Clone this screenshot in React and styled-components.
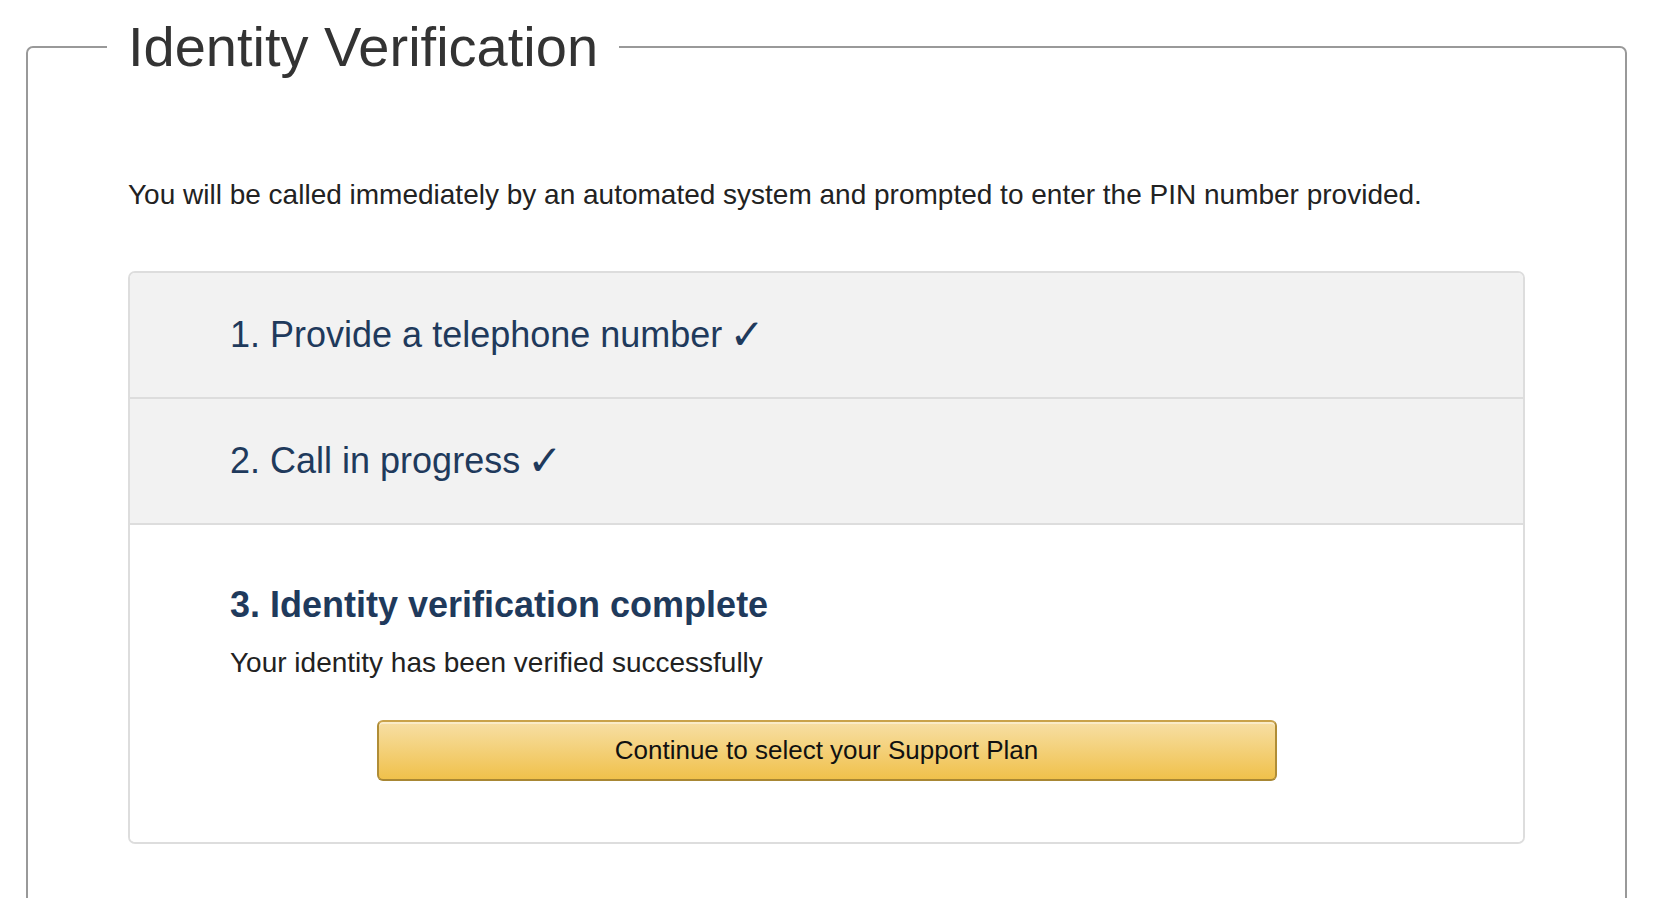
import styled, { createGlobalStyle } from 'styled-components';
import React from 'react';

const GlobalStyle = createGlobalStyle`
  html, body {
    margin: 0;
    padding: 0;
    background: #ffffff;
  }
  body {
    font-family: "Liberation Sans", Arial, sans-serif;
    color: #333333;
  }
`;

export default function App(){
    let passos = [
        { numero: 1, texto: "Provide a telephone number", feito: true },
        { numero: 2, texto: "Call in progress", feito: true },
    ];

    return(
        <>
            <GlobalStyle />
            <Pagina>
                <Quadro>
                    <Legenda>Identity Verification</Legenda>
                    <Aviso>
                        You will be called immediately by an automated system and prompted to enter the PIN number provided.
                    </Aviso>
                    <Passos>
                        {passos.map((p) => (
                            <PassoFeito key={p.numero}>
                                {p.numero}. {p.texto} <Check>✓</Check>
                            </PassoFeito>
                        ))}
                        <PassoAtual>
                            <TituloPasso>3. Identity verification complete</TituloPasso>
                            <Sucesso>Your identity has been verified successfully</Sucesso>
                            <Botao type="button">Continue to select your Support Plan</Botao>
                        </PassoAtual>
                    </Passos>
                </Quadro>
            </Pagina>
        </>
    );
}

const Pagina = styled.div`
    padding: 15px 43px 0 26px;
    box-sizing: border-box;
    width: 100%;
    height: 898px;
    overflow: hidden;
`;

const Quadro = styled.fieldset`
    margin: 0;
    padding: 0 100px 80px 100px;
    border: 2px solid #999999;
    border-radius: 7px;
    min-width: 0;
`;

const Legenda = styled.legend`
    margin-left: -21px;
    padding: 0 21px;
    font-size: 56px;
    line-height: 64px;
    font-weight: normal;
    color: #333333;
`;

const Aviso = styled.p`
    margin: 100px 0 0 0;
    font-size: 28px;
    line-height: 32px;
    color: #222222;
`;

const Passos = styled.div`
    margin-top: 60px;
    border: 2px solid #dddddd;
    border-radius: 7px;
    overflow: hidden;
`;

const PassoFeito = styled.div`
    background: #f2f2f2;
    padding: 41px 100px;
    font-size: 36px;
    line-height: 42px;
    color: #1f3a5c;
    border-bottom: 2px solid #dddddd;
`;

const Check = styled.span`
    font-family: "DejaVu Sans", sans-serif;
    font-size: 42px;
    font-weight: bold;
    line-height: 0;
    margin-left: -3px;
    vertical-align: -2px;
`;

const PassoAtual = styled.div`
    background: #ffffff;
    padding: 59px 100px 61px 100px;
    display: flex;
    flex-direction: column;
`;

const TituloPasso = styled.div`
    font-size: 36px;
    line-height: 42px;
    font-weight: bold;
    color: #1f3a5c;
`;

const Sucesso = styled.div`
    margin-top: 21px;
    font-size: 28px;
    line-height: 32px;
    color: #222222;
`;

const Botao = styled.button`
    align-self: center;
    margin-top: 41px;
    width: 900px;
    height: 61px;
    font-family: "Liberation Sans", Arial, sans-serif;
    font-size: 26px;
    color: #111111;
    background: linear-gradient(to bottom, #f7dfa5, #f0c14b);
    border: 2px solid #a88734;
    border-color: #c9a24a #b08d36 #a88734;
    border-radius: 6px;
    box-shadow: inset 0 2px 0 rgba(255, 255, 255, 0.4);
    cursor: pointer;
`;
